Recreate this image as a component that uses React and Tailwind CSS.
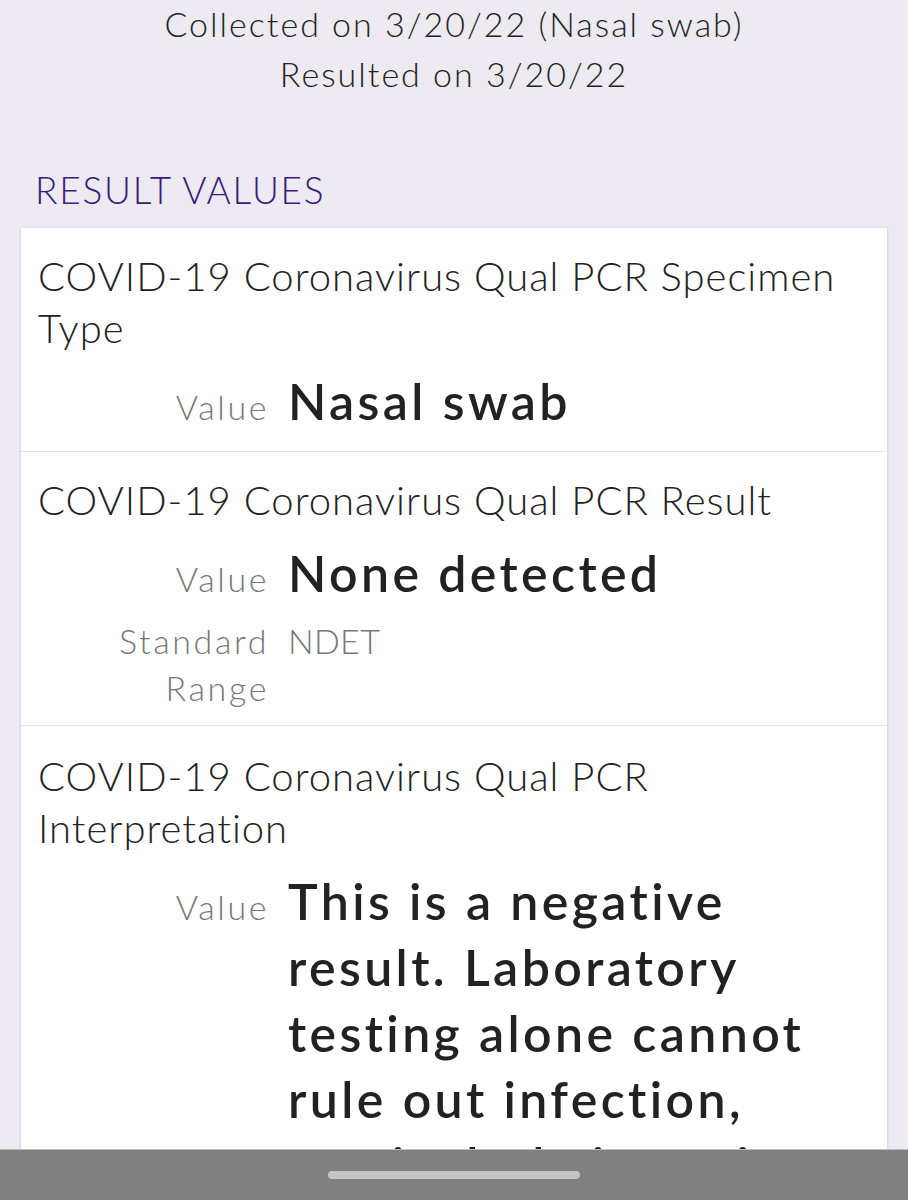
import React from "react";

const font = { fontFamily: "Lato, 'Noto Sans', sans-serif" };

function ValueRow({ label, children, big = true }) {
  return (
    <>
      <div className="text-right text-[34px] leading-[47px] tracking-[2.6px] text-[#777777] font-light">{label}</div>
      <div
        className={
          big
            ? "text-[50px] leading-[66px] tracking-[3.4px] text-[#222222] font-semibold"
            : "text-[34px] leading-[47px] tracking-[0.3px] text-[#777777] font-light"
        }
      >
        {children}
      </div>
    </>
  );
}

function Result({ title, children, pad }) {
  return (
    <div className={pad}>
      <div className="px-[17px] text-[40px] leading-[52px] tracking-[1px] text-[#222222] font-light">{title}</div>
      <div className="mt-[14px] pl-[76px] pr-[17px] grid grid-cols-[172px_1fr] gap-x-[19px] gap-y-[11px] items-baseline">
        {children}
      </div>
    </div>
  );
}

export default function App() {
  return (
    <div style={font} className="relative h-[1200px] overflow-hidden bg-[#edeaf2]">
      <div className="text-center text-[34px] leading-[50px] tracking-[2px] text-[#222222] font-light -mt-px">
        <div>Collected on 3/20/22 (Nasal swab)</div>
        <div>Resulted on 3/20/22</div>
      </div>
      <div className="mt-[69px] mb-[16px] px-[35px] text-[37px] leading-[44px] tracking-[1.8px] text-[#3a1a7a] font-light">
        RESULT VALUES
      </div>
      <div className="mx-[21px] bg-white shadow-[0_1px_3px_rgba(0,0,0,0.18)]">
        <Result title="COVID-19 Coronavirus Qual PCR Specimen Type" pad="pt-[22px] pb-[17px] border-b border-[#e3e3e3]">
          <ValueRow label="Value">Nasal swab</ValueRow>
        </Result>
        <Result title="COVID-19 Coronavirus Qual PCR Result" pad="pt-[22px] pb-[14px] border-b border-[#e3e3e3]">
          <ValueRow label="Value">None detected</ValueRow>
          <ValueRow label="Standard Range" big={false}>NDET</ValueRow>
        </Result>
        <Result title="COVID-19 Coronavirus Qual PCR Interpretation" pad="pt-[24px] pb-[14px]">
          <ValueRow label="Value">
            This is a negative result. Laboratory testing alone cannot rule out infection, particularly in patients
            with symptoms or recent exposure.
          </ValueRow>
        </Result>
      </div>
      <div className="absolute left-0 right-0 bottom-0 h-[51px] bg-[#808080] border-t border-[#bdbdbd] flex justify-center">
        <div className="mt-[21px] w-[252px] h-[8px] rounded-full bg-[#c4c4c4]" />
      </div>
    </div>
  );
}
